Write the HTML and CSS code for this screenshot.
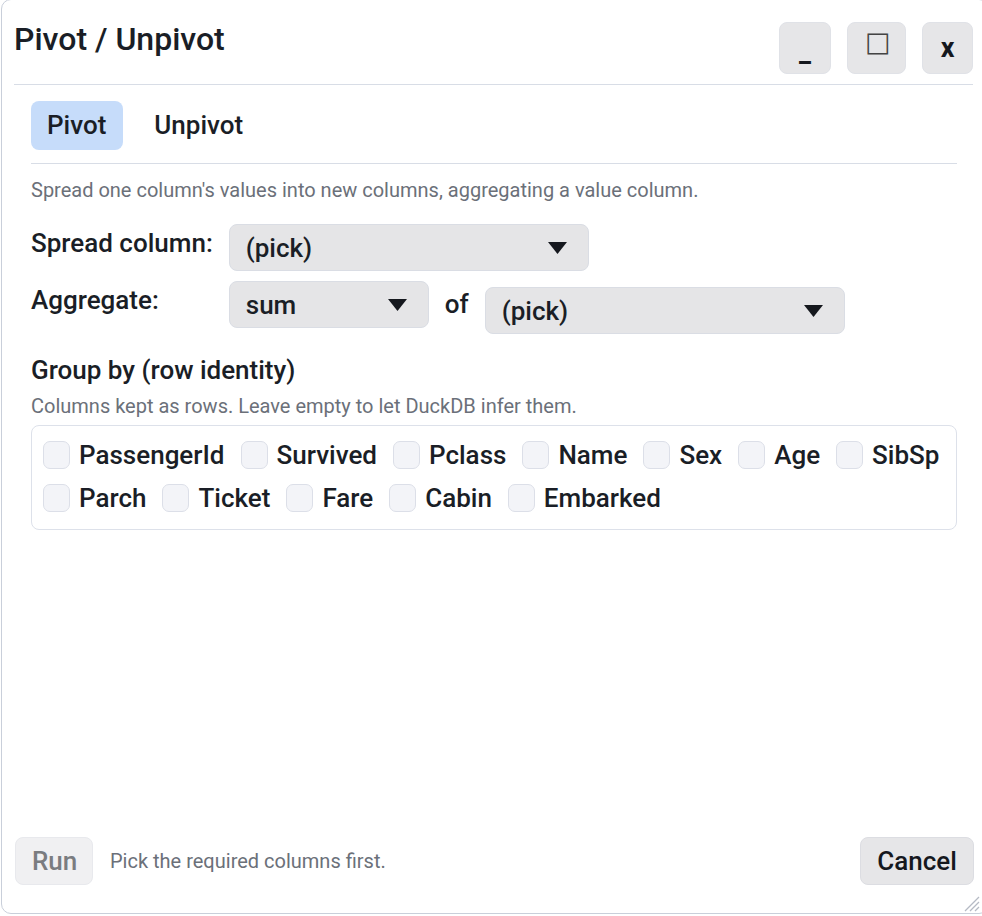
FILE: index.html
```html
<!DOCTYPE html>
<html lang="en">
<head>
    <meta charset="UTF-8">
    <meta name="viewport" content="width=device-width, initial-scale=1.0">
    <title>Pivot / Unpivot</title>
    <link rel="stylesheet" href="styles.css">
</head>
<body>
    <div class="window">
        <header class="win-header">
            <div class="win-title">Pivot / Unpivot</div>
            <div class="win-buttons">
                <button class="win-btn btn-min">_</button>
                <button class="win-btn btn-max">&#9633;</button>
                <button class="win-btn btn-close">x</button>
            </div>
        </header>

        <main class="pane">
            <nav class="tabs">
                <a href="#" class="tab active">Pivot</a>
                <a href="#" class="tab">Unpivot</a>
            </nav>

            <p class="hint desc">Spread one column's values into new columns, aggregating a value column.</p>

            <div class="form-grid">
                <div class="field-label">Spread column:</div>
                <div class="field-row">
                    <div class="select wide">
                        <span>(pick)</span>
                        <svg class="caret" width="19" height="12" viewBox="0 0 19 12"><path d="M0 0h19L9.5 12z" fill="#15181e"/></svg>
                    </div>
                </div>

                <div class="field-label">Aggregate:</div>
                <div class="field-row">
                    <div class="select narrow">
                        <span>sum</span>
                        <svg class="caret" width="19" height="12" viewBox="0 0 19 12"><path d="M0 0h19L9.5 12z" fill="#15181e"/></svg>
                    </div>
                    <span class="of-label">of</span>
                    <div class="select wide of-select">
                        <span>(pick)</span>
                        <svg class="caret" width="19" height="12" viewBox="0 0 19 12"><path d="M0 0h19L9.5 12z" fill="#15181e"/></svg>
                    </div>
                </div>
            </div>

            <h2 class="group-title">Group by (row identity)</h2>
            <p class="hint group-hint">Columns kept as rows. Leave empty to let DuckDB infer them.</p>

            <div class="check-box">
                <label class="check"><span class="box"></span>PassengerId</label>
                <label class="check"><span class="box"></span>Survived</label>
                <label class="check"><span class="box"></span>Pclass</label>
                <label class="check"><span class="box"></span>Name</label>
                <label class="check"><span class="box"></span>Sex</label>
                <label class="check"><span class="box"></span>Age</label>
                <label class="check"><span class="box"></span>SibSp</label>
                <label class="check"><span class="box"></span>Parch</label>
                <label class="check"><span class="box"></span>Ticket</label>
                <label class="check"><span class="box"></span>Fare</label>
                <label class="check"><span class="box"></span>Cabin</label>
                <label class="check"><span class="box"></span>Embarked</label>
            </div>
        </main>

        <footer class="win-footer">
            <button class="btn btn-run" disabled>Run</button>
            <span class="status">Pick the required columns first.</span>
            <button class="btn btn-cancel">Cancel</button>
        </footer>

        <svg class="grip" width="20" height="20" viewBox="0 0 20 20">
            <path d="M19 5L5 19M19 10L10 19M19 15L15 19" stroke="#b5bac4" stroke-width="1.3" fill="none"/>
        </svg>
    </div>
</body>
</html>
```

FILE: styles.css
```css
*,::after,::before{
    padding: 0;
    margin: 0;
    box-sizing: border-box;
}

body{
    font-family: Roboto, 'Noto Sans', sans-serif;
    color: #1a1e26;
    background: #ffffff;
    overflow: hidden;
}

.window{
    position: relative;
    width: 988px;
    height: 915px;
    margin: -1px 0 0 1px;
    padding: 22px 15px 28px 12px;
    border: 1px solid #c9cfda;
    border-radius: 10px;
    background: #ffffff;
    display: flex;
    flex-direction: column;
}

/* header */
.win-header{
    display: flex;
    align-items: flex-start;
    justify-content: space-between;
    padding-bottom: 10px;
    border-bottom: 1px solid #d8dde6;
}

.win-title{
    font-size: 32px;
    font-weight: 500;
    line-height: 34px;
}

.win-buttons{
    display: flex;
    gap: 16px;
}

.win-btn{
    height: 52px;
    padding: 0 17px;
    border: 1px solid #e0e2e7;
    border-radius: 8px;
    background: #e6e6e8;
    color: #15181e;
    font-family: Roboto, sans-serif;
    font-size: 27px;
    font-weight: 700;
}

.btn-min{
    width: 52px;
    padding-top: 8px;
}

.btn-max{
    width: 59px;
    font-weight: 400;
    color: #444;
    font-family: 'DejaVu Sans', sans-serif;
    padding-bottom: 14px;
}

.btn-close{
    width: 51px;
}

/* content */
.pane{
    flex: 1;
    padding: 0 16px 0 17px;
}

.tabs{
    display: flex;
    gap: 15px;
    margin-top: 16px;
    padding-bottom: 13px;
    border-bottom: 1px solid #d8dde6;
}

.tab{
    display: inline-block;
    height: 49px;
    line-height: 49px;
    padding: 0 17px 0 16px;
    border-radius: 8px;
    color: #1a1e26;
    text-decoration: none;
    font-size: 26px;
    font-weight: 500;
}

.tab.active{
    background: #c6dcfa;
}

.hint{
    color: #6b7079;
    font-size: 20px;
    line-height: 24px;
}

.desc{
    margin-top: 14px;
}

.form-grid{
    display: grid;
    grid-template-columns: auto 1fr;
    column-gap: 16px;
    row-gap: 10px;
    margin-top: 22px;
}

.field-label{
    font-size: 26px;
    font-weight: 500;
    line-height: 32px;
    padding-top: 3px;
}

.field-row{
    display: flex;
    align-items: flex-start;
    gap: 16px;
}

.select{
    height: 47px;
    display: flex;
    align-items: center;
    justify-content: space-between;
    padding: 0 21px 0 16px;
    border: 1px solid #dadde4;
    border-radius: 8px;
    background: #e5e5e7;
    font-size: 26px;
    font-weight: 500;
}

.select.wide{
    width: 360px;
}

.select.narrow{
    width: 200px;
}

.of-label{
    font-size: 26px;
    font-weight: 500;
    line-height: 32px;
    padding-top: 7px;
}

.of-select{
    margin-top: 6px;
}

.group-title{
    margin-top: 20px;
    font-size: 26px;
    font-weight: 500;
    line-height: 32px;
}

.group-hint{
    margin-top: 8px;
}

.check-box{
    margin-top: 7px;
    display: flex;
    flex-wrap: wrap;
    gap: 7px 16px;
    padding: 11px 11px 13px;
    border: 1px solid #dde1ea;
    border-radius: 8px;
}

.check{
    display: flex;
    align-items: center;
    gap: 9px;
    height: 36px;
    font-size: 26px;
    font-weight: 500;
}

.check .box{
    width: 27px;
    height: 28px;
    border: 1px solid #dcdfe8;
    border-radius: 7px;
    background: #f3f4f8;
}

/* footer */
.win-footer{
    display: flex;
    align-items: center;
    gap: 17px;
}

.btn{
    height: 48px;
    padding: 0 16px;
    border-radius: 8px;
    font-family: Roboto, sans-serif;
    font-size: 26px;
    font-weight: 500;
}

.btn-run{
    width: 78px;
    margin-left: 1px;
    background: #f0f0f2;
    border: 1px solid #e8e9ed;
    color: #7a7c80;
}

.btn-cancel{
    width: 114px;
    margin-left: auto;
    margin-right: -1px;
    background: #e6e6e8;
    border: 1px solid #dcdde2;
    color: #15181e;
}

.status{
    color: #6b7079;
    font-size: 20px;
}

.grip{
    position: absolute;
    right: 8px;
    bottom: 1px;
}
```
